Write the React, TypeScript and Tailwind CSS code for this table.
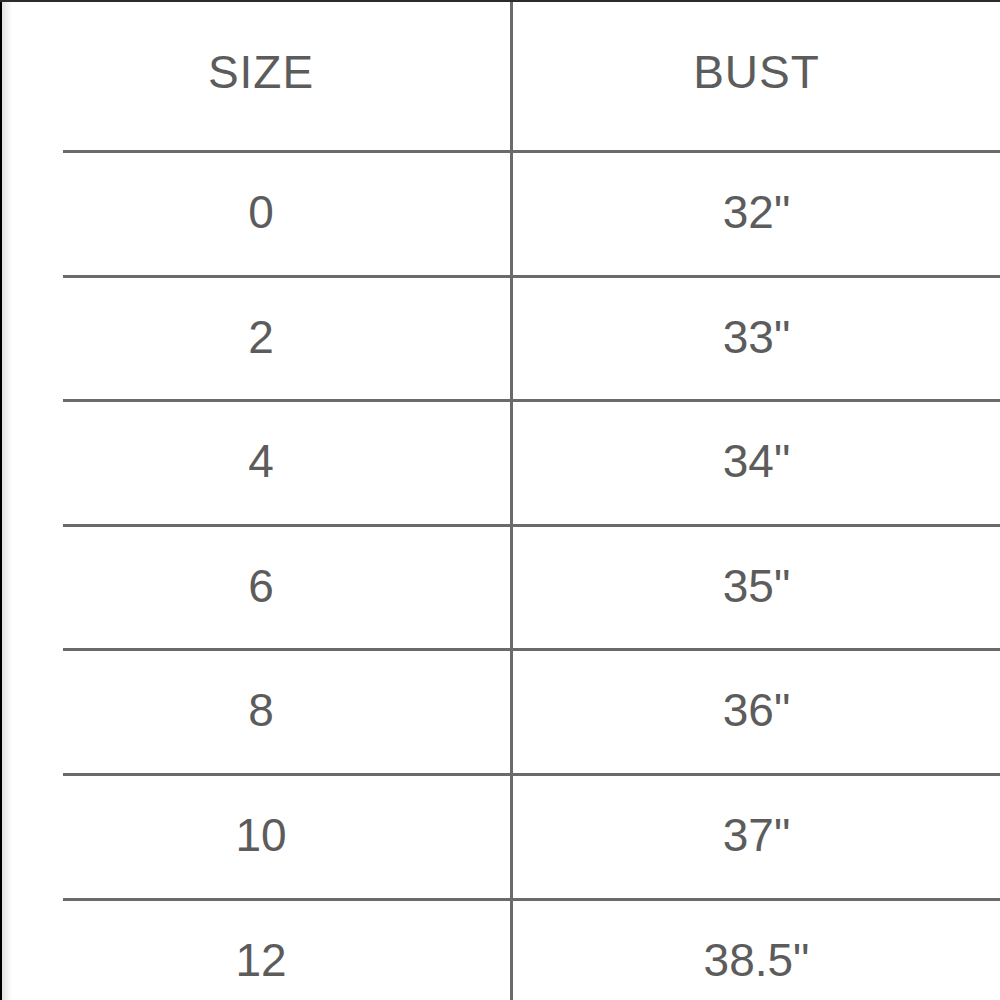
const rows = [
  { size: '0', bust: '32"', h: 'h-[122px]' },
  { size: '2', bust: '33"', h: 'h-[121px]' },
  { size: '4', bust: '34"', h: 'h-[122px]' },
  { size: '6', bust: '35"', h: 'h-[121px]' },
  { size: '8', bust: '36"', h: 'h-[122px]' },
  { size: '10', bust: '37"', h: 'h-[122px]' },
  { size: '12', bust: '38.5"', h: 'h-[122px]' },
];

// horizontal rule between rows; left side starts a bit in from the edge
const Rule = () => (
  <div className="flex h-[3px] shrink-0">
    <div className="w-[51px] bg-white" />
    <div className="flex-1 bg-[#6a6a6a]" />
  </div>
);

const Row = ({ left, right, h }: { left: string; right: string; h: string }) => (
  <div className={`flex shrink-0 ${h}`}>
    <div className="w-[498px] flex items-center justify-center pb-[4px]">
      <span className="leading-none">{left}</span>
    </div>
    <div className="w-[3px] bg-[#6a6a6a]" />
    <div className="flex-1 flex items-center justify-center pb-[4px]">
      <span className="leading-none">{right}</span>
    </div>
  </div>
);

const Header = () => (
  <div className="flex h-[148px] shrink-0 tracking-[1px]">
    <div className="w-[498px] flex justify-center pt-[47px]">
      <span className="leading-none">SIZE</span>
    </div>
    <div className="w-[3px] bg-[#6a6a6a]" />
    <div className="flex-1 flex justify-center pt-[47px]">
      <span className="leading-none">BUST</span>
    </div>
  </div>
);

export default function App() {
  return (
    <div
      className="w-[1000px] h-[1000px] overflow-hidden bg-white border-t-2 border-[#2b2b2b] flex text-[46px] text-[#5c5c5c]"
      style={{ fontFamily: '"Liberation Sans", Arial, sans-serif' }}
    >
      <div className="w-[12px] border-l-2 border-black bg-gradient-to-r from-[#e2e2e2] to-white" />
      <div className="flex-1 flex flex-col">
        <Header />
        {rows.map((r) => (
          <div key={r.size} className="shrink-0">
            <Rule />
            <Row left={r.size} right={r.bust} h={r.h} />
          </div>
        ))}
      </div>
    </div>
  );
}
